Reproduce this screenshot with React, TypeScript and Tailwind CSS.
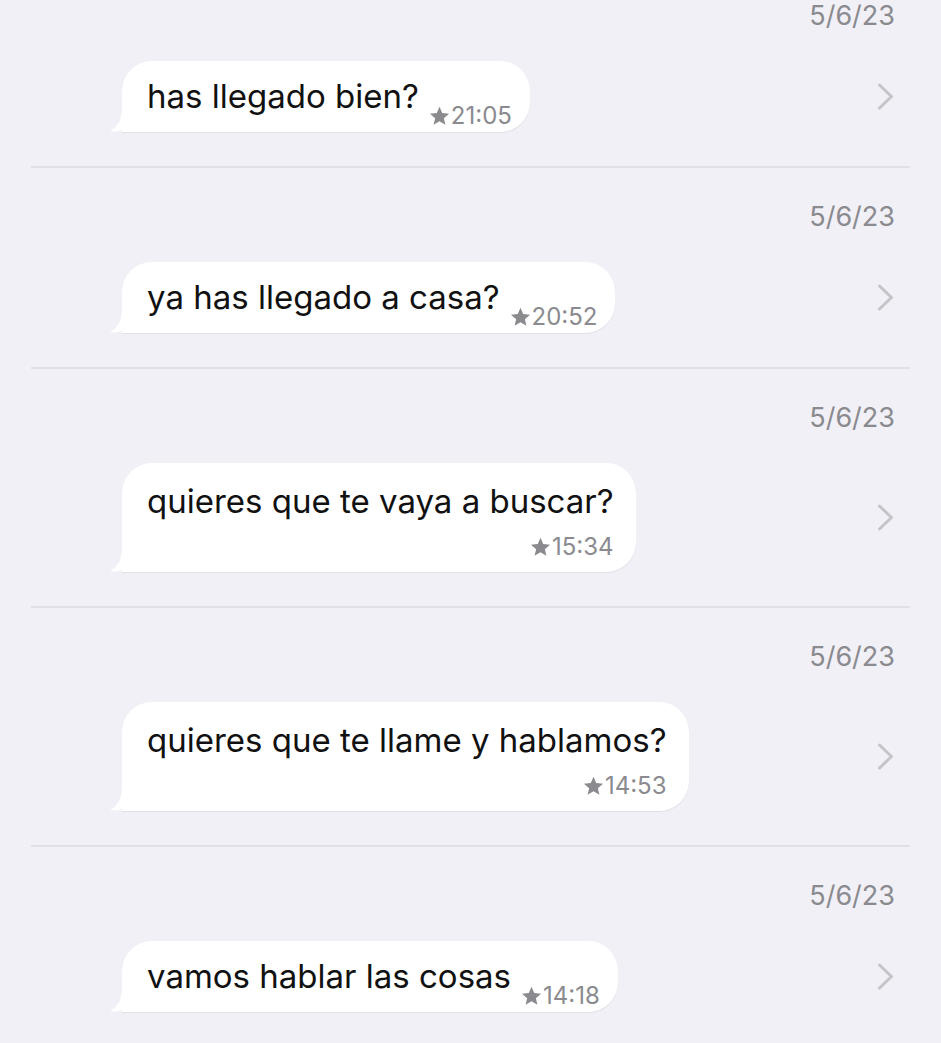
const messages = [
    { date: "5/6/23", text: "has llegado bien?", time: "21:05", wrap: false },
    { date: "5/6/23", text: "ya has llegado a casa?", time: "20:52", wrap: false },
    { date: "5/6/23", text: "quieres que te vaya a buscar?", time: "15:34", wrap: true },
    { date: "5/6/23", text: "quieres que te llame y hablamos?", time: "14:53", wrap: true },
    { date: "5/6/23", text: "vamos hablar las cosas", time: "14:18", wrap: false },
];

function Star() {
    return (
        <svg width="21" height="20" viewBox="0 0 24 23" className="mr-[1px] mb-[3px]">
            <path
                d="M12 0.8l3.1 7.3 7.9 0.7-6 5.2 1.8 7.7L12 17.6l-6.8 4.1 1.8-7.7-6-5.2 7.9-0.7z"
                fill="#8a8a8f"
            />
        </svg>
    );
}

function Time({ time }: { time: string }) {
    return (
        <span className="flex items-end text-[24px] leading-[26px] text-[#8a8a8f]">
            <Star />
            {time}
        </span>
    );
}

function Tail() {
    return (
        <svg
            width="16"
            height="24"
            viewBox="0 0 16 24"
            className="absolute bottom-0 left-[-12px]"
        >
            <path d="M16 0H12C12 11 8 19 0 23C6 24 11 23 16 20Z" fill="#ffffff" />
        </svg>
    );
}

function Bubble({ text, time, wrap }: { text: string; time: string; wrap: boolean }) {
    if (wrap) {
        return (
            <div className="relative rounded-[30px] rounded-bl-none bg-white pt-[18px] pr-[22px] pb-[12px] pl-[25px] shadow-[0_1px_1px_rgba(0,0,0,0.07)]">
                <Tail />
                <div className="text-[33px] leading-[40px] text-[#111]">{text}</div>
                <div className="mt-[13px] flex justify-end">
                    <Time time={time} />
                </div>
            </div>
        );
    }
    return (
        <div className="relative flex items-end rounded-[30px] rounded-bl-none bg-white pt-[15px] pr-[18px] pb-[3px] pl-[25px] shadow-[0_1px_1px_rgba(0,0,0,0.07)]">
            <Tail />
            <span className="mb-[13px] text-[33px] leading-[40px] text-[#111]">{text}</span>
            <span className="ml-[10px]">
                <Time time={time} />
            </span>
        </div>
    );
}

function Chevron() {
    return (
        <svg width="17" height="27" viewBox="0 0 17 27">
            <polyline
                points="2.5,2 14.5,13.5 2.5,25"
                fill="none"
                stroke="#c4c4c9"
                strokeWidth="3"
                strokeLinecap="round"
                strokeLinejoin="round"
            />
        </svg>
    );
}

export default function App() {
    return (
        <div
            className="h-[1043px] overflow-hidden bg-[#f1f0f6]"
            style={{ fontFamily: "Inter, 'Noto Sans', sans-serif" }}
        >
            <div className="mt-[-33px]">
                {messages.map((m, i) => (
                    <div key={i}>
                        {i > 0 && <div className="mx-[31px] h-[2px] bg-[#e0e0e6]" />}
                        <div className="pt-[33px] pb-[34px]">
                            <div className="pr-[46px] text-right text-[27px] leading-[32px] text-[#8a8a8f]">
                                {m.date}
                            </div>
                            <div className="mt-[29px] flex items-center justify-between pr-[47px] pl-[122px]">
                                <Bubble text={m.text} time={m.time} wrap={m.wrap} />
                                <Chevron />
                            </div>
                        </div>
                    </div>
                ))}
            </div>
        </div>
    );
}
